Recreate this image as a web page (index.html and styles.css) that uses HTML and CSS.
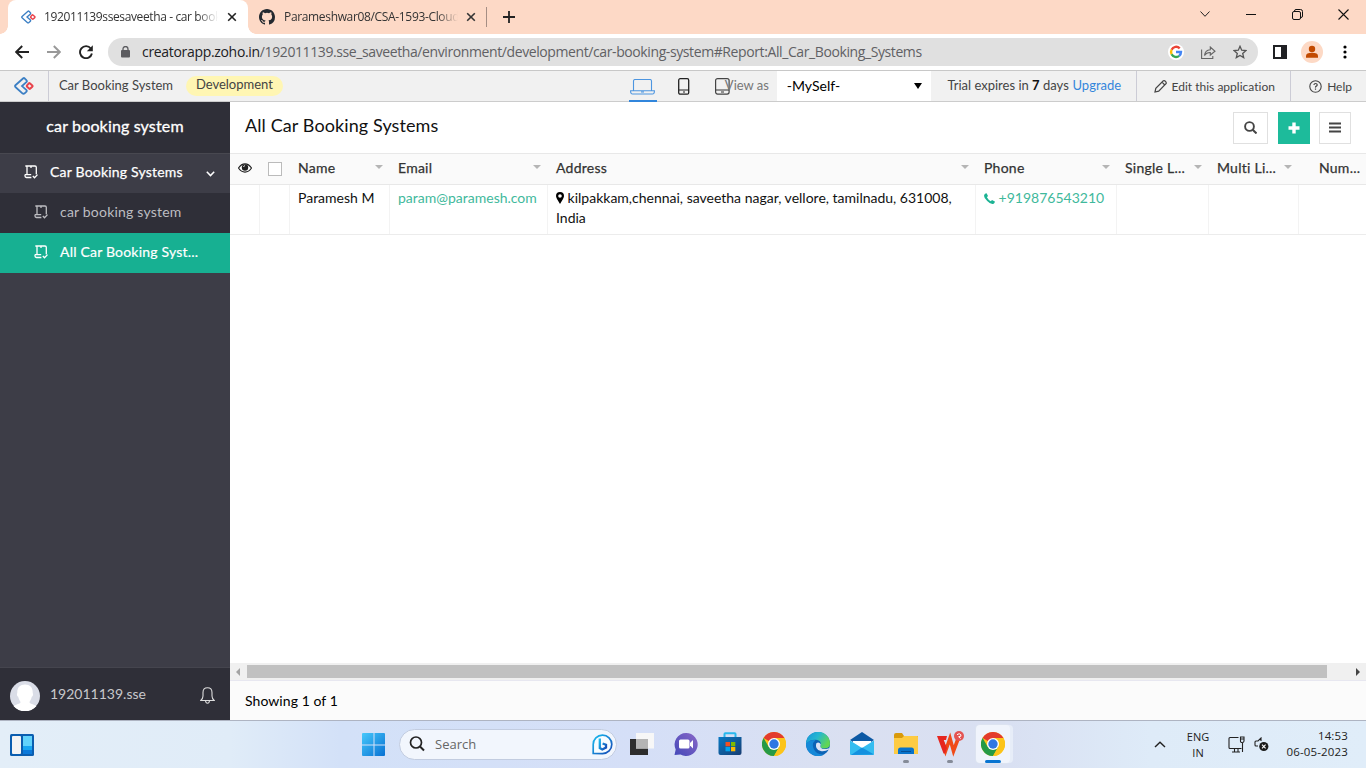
FILE: index.html
```html
<!DOCTYPE html>
<html lang="en">
<head>
<meta charset="utf-8">
<title>car booking system</title>
<link rel="stylesheet" href="styles.css">
</head>
<body>
<svg class="defs" width="0" height="0">
  <symbol id="zoho" viewBox="0 0 20 18"><path d="M9.300 1.300 1.400 8.200a1.200 1.200 0 0 0 0 1.800l7 6.300a1.600 1.600 0 0 0 2.200 0l1.900-1.700a1 1 0 0 0 0-1.500L8 9.100l4.600-4.200a1 1 0 0 0 0-1.500l-2-2.100a1 1 0 0 0-1.300 0Z" fill="none" stroke="#3b7fc4" stroke-width="1.800"/><path d="m15.800 6.300 2.500 2.100a.9.900 0 0 1 0 1.400l-2 1.800a.9.900 0 0 1-1.200 0l-2-1.800a.9.900 0 0 1 0-1.400l1.700-2a.8.800 0 0 1 1-.100Z" fill="none" stroke="#e8434c" stroke-width="2"/></symbol>
  <symbol id="report" viewBox="0 0 14 14"><path d="M3 9.500V2.200Q3 1 1.300 1H11q1.300 0 1.300 1.300v7M.8 9.700h6.400M1 9.700v1.400q0 1.400 1.400 1.400h5M7 1v2M8.800 11l1.700 1.800 3-3.200" fill="none" stroke="currentColor" stroke-width="1.300"/></symbol>
  <symbol id="chrome" viewBox="0 0 24 24"><circle cx="12" cy="12" r="12" fill="#fcc419"/><path d="M12 12 1.600 6A12 12 0 0 1 22.400 6Z" fill="#e33b2e"/><path d="M1.600 6A12 12 0 0 0 12 24l5.200-9L12 12 6.800 15Z" fill="#269a46"/><path d="M12 6h10.400A12 12 0 0 1 12 24l5.200-9Z" fill="#fcc419"/><circle cx="12" cy="12" r="6" fill="#fff"/><circle cx="12" cy="12" r="4.700" fill="#3077e3"/></symbol>
</svg>

<header class="tabs">
  <div class="tab tab-active">
    <svg class="favicon" width="15" height="14"><use href="#zoho"/></svg>
    <span class="tab-text t1">192011139ssesaveetha - car book</span>
    <svg width="10" height="10" viewBox="0 0 10 10"><path d="m1.200 1.200 7.600 7.600m0-7.600L1.200 8.800" stroke="#222" stroke-width="1.600"/></svg>
  </div>
  <div class="tab">
    <svg class="favicon gh" width="16" height="16" viewBox="0 0 16 16"><path fill="#24292f" d="M8 0C3.580 0 0 3.580 0 8c0 3.540 2.290 6.530 5.470 7.590.4.070.55-.170.55-.380 0-.190-.010-.820-.010-1.490-2.010.370-2.530-.490-2.690-.940-.090-.230-.480-.940-.820-1.130-.280-.150-.680-.520-.010-.530.630-.010 1.080.580 1.230.820.720 1.210 1.870.870 2.330.660.070-.520.280-.870.510-1.070-1.780-.200-3.640-.890-3.640-3.950 0-.870.310-1.590.820-2.150-.080-.200-.360-1.020.080-2.120 0 0 .670-.210 2.200.820a7.600 7.600 0 0 1 4 0c1.530-1.040 2.200-.820 2.200-.820.440 1.100.160 1.920.080 2.120.510.560.820 1.270.820 2.150 0 3.070-1.870 3.750-3.650 3.950.290.250.540.730.540 1.480 0 1.070-.010 1.930-.010 2.200 0 .210.150.460.550.380A8 8 0 0 0 16 8c0-4.420-3.580-8-8-8Z"/></svg>
    <span class="tab-text t2">Parameshwar08/CSA-1593-Cloud</span>
    <svg width="10" height="10" viewBox="0 0 10 10"><path d="m1.200 1.200 7.600 7.600m0-7.600L1.200 8.800" stroke="#333" stroke-width="1.600"/></svg>
  </div>
  <i class="tab-sep"></i>
  <svg class="newtab" width="12" height="12"><path d="M6 0v12M0 6h12" stroke="#222" stroke-width="1.800"/></svg>
  <div class="win">
    <svg width="10" height="6"><path d="m.500.500 4.500 4.800L9.500.500" fill="none" stroke="#222"/></svg>
    <svg width="10" height="6"><path d="M0 3.500h10" stroke="#111"/></svg>
    <svg width="11" height="11"><rect x=".5" y="2.500" width="8" height="8" rx="1.500" fill="none" stroke="#111"/><path d="M2.500 2.500v-.500q0-1.500 1.500-1.500h4.500q2 0 2 2V7q0 1.500-1.500 1.500" fill="none" stroke="#111"/></svg>
    <svg width="11" height="11"><path d="m.500.500 10 10m0-10-10 10" stroke="#111" stroke-width="1.100"/></svg>
  </div>
</header>

<nav class="toolbar">
  <svg class="back" width="14" height="14" viewBox="0 0 14 14"><path d="M14 7H1.500M7.200 1 1.200 7l6 6" fill="none" stroke="#222" stroke-width="1.900"/></svg>
  <svg class="fwd" width="14" height="14" viewBox="0 0 14 14"><path d="M0 7h12.500M6.800 1l6 6-6 6" fill="none" stroke="#999" stroke-width="1.900"/></svg>
  <svg class="reload" width="14" height="14" viewBox="0 0 14 14"><path d="M11.800 3.500A6 6 0 1 0 12.900 8.500" fill="none" stroke="#222" stroke-width="1.900"/><path d="M13.800.2v6H7.800Z" fill="#222"/></svg>
  <div class="omnibox">
    <svg class="lock" width="9" height="12" viewBox="0 0 9 12"><rect y="4" width="9" height="7.500" rx="1" fill="#5b5b5f"/><path d="M2 5V3a2.500 2.500 0 0 1 5 0v2" fill="none" stroke="#5b5b5f" stroke-width="1.300"/></svg>
    <span class="url"><b>creatorapp.zoho.in</b>/192011139.sse_saveetha/environment/development/car-booking-system#Report:All_Car_Booking_Systems</span>
    <svg class="google" width="16" height="16" viewBox="0 0 16 16"><circle cx="8" cy="8" r="8" fill="#fff"/><path d="M11.700 4.300A5 5 0 0 0 3.600 5.700" stroke="#ea4335"/><path d="M3.600 5.700a5 5 0 0 0 0 4.600" stroke="#fbbc05"/><path d="M3.600 10.300a5 5 0 0 0 7.600 1.500" stroke="#34a853"/><path d="M11.200 11.800A5 5 0 0 0 13 8H8" stroke="#4285f4"/></svg>
    <svg class="share" width="15" height="13" viewBox="0 0 15 13"><path d="M.6 3.500v9h11.200V10M3.500 9.500Q4 4 9.300 3.700V1L14 5.300 9.300 9V6.500Q5.500 6.300 3.500 9.500Z" fill="none" stroke="#666" stroke-width="1.100"/></svg>
    <svg class="star" width="14" height="14" viewBox="0 0 14 14"><path d="m7 1.300 1.700 3.900 4.200.4-3.200 2.800 1 4.200L7 10.400l-3.700 2.200 1-4.200L1.100 5.600l4.200-.4Z" fill="none" stroke="#555" stroke-width="1.300"/></svg>
  </div>
  <svg class="panel" width="14" height="14"><rect x="1" y="1" width="12" height="12" fill="#fff" stroke="#202124" stroke-width="2"/><path d="M8 0h6v14H8Z" fill="#202124"/></svg>
  <svg class="profile" width="22" height="22"><circle cx="11" cy="11" r="11" fill="#fdd9c5"/><circle cx="11" cy="8" r="3.200" fill="#c24a00"/><path d="M5 16.800V15q0-3.200 6-3.200t6 3.200v1.800Z" fill="#c24a00"/></svg>
  <svg class="dots" width="4" height="14"><circle cx="2" cy="2" r="1.600"/><circle cx="2" cy="7" r="1.600"/><circle cx="2" cy="12" r="1.600"/></svg>
</nav>

<section class="appbar">
  <div class="brand"><svg width="20" height="18"><use href="#zoho"/></svg></div>
  <span class="appname">Car Booking System</span>
  <span class="badge">Development</span>
  <div class="device current"><svg width="25" height="16" viewBox="0 0 25 16"><path d="M3.500 12V2q0-1.500 1.500-1.500h15q1.500 0 1.500 1.500v10M.6 11.800h23.800q.1 3.200-2 3.200H2.600q-2.100 0-2-3.200ZM11 13h3" fill="none" stroke="#4c95e0" stroke-width="1.100"/></svg></div>
  <svg class="phone" width="12" height="17"><rect x=".7" y=".7" width="10" height="15.500" rx="1.500" fill="none" stroke="#222" stroke-width="1.300"/><path d="M1 12h10" stroke="#222"/><path d="M5 14h2" stroke="#222"/></svg>
  <svg class="tablet" width="15" height="17"><rect x=".6" y=".6" width="13.500" height="15.500" rx="2" fill="none" stroke="#444" stroke-width="1.200"/><path d="M1 12h13M6 14h3" stroke="#333"/></svg>
  <span class="viewas">View as</span>
  <div class="select"><span>-MySelf-</span><i></i></div>
  <span class="trial">Trial expires in <b>7</b> days</span><span class="upgrade">Upgrade</span>
  <div class="edit"><svg width="13" height="13" viewBox="0 0 13 13"><path d="m1 12 .8-3.700L9.300.8q1.200-.5 2.200.6t.7 2.100l-7.500 7.700ZM8 2.200 10.800 5" fill="none" stroke="#444" stroke-width="1.200"/></svg><span>Edit this application</span></div>
  <div class="help"><svg width="13" height="13"><circle cx="6.500" cy="6.500" r="5.700" fill="none" stroke="#444" stroke-width="1.100"/><path d="M4.900 5q.2-1.500 1.700-1.500T8.200 4.900Q8.200 5.700 7.300 6.100T6.500 7.600M6.500 8.500v1.200" fill="none" stroke="#444" stroke-width="1.200"/></svg><span>Help</span></div>
</section>

<div class="work">
  <aside class="side">
    <div class="side-title">car booking system</div>
    <div class="item section"><svg width="14" height="14"><use href="#report"/></svg><span>Car Booking Systems</span><svg class="down" width="9" height="6"><path d="m.8.800 3.700 3.800L8.200.800" fill="none" stroke="#fff" stroke-width="1.500"/></svg></div>
    <div class="item sub"><svg width="14" height="14"><use href="#report"/></svg><span>car booking system</span></div>
    <div class="item sub selected"><svg width="14" height="14"><use href="#report"/></svg><span>All Car Booking Syst...</span></div>
    <div class="user">
      <svg class="avatar" width="30" height="30"><circle cx="15" cy="15" r="15" fill="#dadde7"/><path d="M15 3.500c5 0 8 3 7.700 8.500 1 2-.2 3.300-.9 3.700-.5 2.600-2 4.300-2.300 5.300 0 2 4.500 2.300 7 4A15 15 0 0 1 3.500 25c2.500-1.700 7-2 7-4-.3-1-1.800-2.700-2.300-5.300-.7-.4-1.900-1.700-.9-3.700C7 6.500 10 3.500 15 3.500Z" fill="#fff"/></svg>
      <span>192011139.sse</span>
      <svg class="bell" width="15" height="17" viewBox="0 0 15 17"><path d="M.8 13.500h13.400Q12 11.500 12 9V5.500Q12 .8 7.500.8T3 5.500V9q0 2.500-2.200 4.500ZM5.500 13.700q.3 2.500 2 2.500t2-2.500" fill="none" stroke="#ddd" stroke-width="1.100"/></svg>
    </div>
  </aside>
  <main class="main">
    <div class="head">
      <h1>All Car Booking Systems</h1>
      <div class="btn wide"><svg width="13" height="13"><circle cx="5.500" cy="5.500" r="4.400" fill="none" stroke="#444" stroke-width="1.900"/><path d="m8.700 8.700 3.800 3.800" stroke="#444" stroke-width="2"/></svg></div>
      <div class="btn add"><svg width="12" height="12"><path d="M6 .5v11M.5 6h11" stroke="#fff" stroke-width="3.400"/></svg></div>
      <div class="btn"><svg width="12" height="11"><path d="M0 1.500h12M0 5.500h12M0 9.500h12" stroke="#444" stroke-width="2"/></svg></div>
    </div>
    <div class="grid thead">
      <div class="eye"><svg width="14" height="10"><path d="M.5 5Q3.300.9 7 .9T13.500 5Q10.700 9.100 7 9.100T.5 5Z" fill="#fff" stroke="#222" stroke-width="1.200"/><circle cx="7" cy="4.500" r="3.200" fill="#222"/><path d="M5.500 4Q5.600 2.700 7 2.600" stroke="#fff" fill="none" stroke-width=".8"/></svg></div>
      <div class="check"><i></i></div>
      <div><span>Name</span><i class="caret"></i></div>
      <div><span>Email</span><i class="caret"></i></div>
      <div><span>Address</span><i class="caret"></i></div>
      <div><span>Phone</span><i class="caret"></i></div>
      <div><span>Single L...</span><i class="caret"></i></div>
      <div><span>Multi Li...</span><i class="caret"></i></div>
      <div class="num"><span>Num...</span></div>
    </div>
    <div class="grid row">
      <div></div><div></div>
      <div><span class="c-name">Paramesh M</span></div>
      <div class="link"><span class="c-mail">param@paramesh.com</span></div>
      <div class="address"><svg width="8" height="12" viewBox="0 0 8 12"><path d="M4 0a4 4 0 0 1 4 4q0 1.200-1 3L4 12 1 7Q0 5.200 0 4a4 4 0 0 1 4-4Zm0 2.200a1.800 1.800 0 1 0 0 3.600 1.800 1.800 0 0 0 0-3.600Z"/></svg> kilpakkam,chennai, saveetha nagar, vellore, tamilnadu, 631008,<br>India</div>
      <div class="link"><svg width="11" height="11" viewBox="0 0 11 11"><path d="M.2 2Q.6.300 2.600.200L4 3 2.900 4.300q1.300 2.600 3.900 3.900L8 7l2.900 1.500q0 2-1.700 2.400Q6.500 11.500 3.200 8 -.6 4.500.2 2Z" fill="#1cb394"/></svg> <span class="c-phone">+919876543210</span></div>
      <div></div><div></div><div></div>
    </div>
    <div class="blank"></div>
    <div class="scroll"><svg width="17" height="17"><path d="m10 5-4 4 4 4Z" fill="#a3a3a3"/></svg><i></i><svg width="17" height="17"><path d="m7 5 4 4-4 4Z" fill="#444"/></svg></div>
    <footer class="foot">Showing 1 of 1</footer>
  </main>
</div>

<footer class="taskbar">
  <svg class="widgets" width="24" height="22"><defs><linearGradient id="sky" x1="0" y1="0" x2="1" y2="1"><stop stop-color="#46c8fb"/><stop offset="1" stop-color="#0871d3"/></linearGradient></defs><rect width="24" height="22" rx="1.500" fill="#0b5eb0"/><rect x="2" y="2" width="9" height="18" rx="1" fill="#f4f4f4"/><path d="M13 2h9v10h-9Z" fill="#62d3fb"/><path d="M13 12h9v4h-9Z" fill="#18a6f2"/><path d="M13 16h9v4h-9Z" fill="#0b79da"/></svg>
  <svg class="start" width="24" height="24"><path d="M0 1q0-1 1-1h10.500v11.500H0ZM12.500 0H22q1 0 1 1v10.500H12.500ZM0 12.500h11.500V23H1q-1 0-1-1ZM12.500 12.500H23V22q0 1-1 1h-9.500Z" fill="url(#sky)"/></svg>
  <div class="search">
    <svg width="16" height="16"><circle cx="7" cy="6.500" r="5.500" fill="none" stroke="#222" stroke-width="1.700"/><path d="m11 10.500 4 4" stroke="#222" stroke-width="2"/></svg>
    <span>Search</span>
    <svg class="bing" width="21" height="21"><defs><linearGradient id="bg" x1="0" y1="0" x2="1" y2="1"><stop stop-color="#19bdf0"/><stop offset="1" stop-color="#1648b5"/></linearGradient></defs><path d="M1.200 19.500V10.500a9.300 9.300 0 1 1 9.300 9.200Z" fill="#f7fcff" stroke="url(#bg)" stroke-width="1.700"/><path d="M7.800 4.500v9.500l2.500 1.500 3.700-2v-2.700l-3.400-1.300" fill="none" stroke="url(#bg)" stroke-width="2.300"/></svg>
  </div>
  <div class="apps">
    <div><svg width="24" height="24"><path d="M0 7h18v16H0Z" fill="#2d2d2d"/><path d="M6 1h18v15.500H6Z" fill="#f7f7f7"/><path d="M6 7h12v9.500H6Z" fill="#b4b4b4"/></svg></div>
    <div><svg width="24" height="24"><defs><linearGradient id="cg" x1="0" y1="1" x2="1" y2="0"><stop stop-color="#4348b8"/><stop offset="1" stop-color="#8a68c8"/></linearGradient></defs><path d="M12 1a11.500 11.500 0 1 1-5.500 21.500L.5 23l1.200-5.500A11.500 11.500 0 0 1 12 1Z" fill="url(#cg)"/><rect x="5" y="7.500" width="10.500" height="9" rx="1.500" fill="#fff"/><path d="m16 11 3-3v8.500l-3-3Z" fill="#fff"/></svg></div>
    <div><svg width="24" height="24"><defs><linearGradient id="sg" x1="0" y1="0" x2="1" y2="1"><stop stop-color="#0879c4"/><stop offset="1" stop-color="#183d72"/></linearGradient></defs><path d="M6.500 6V2q0-.8.800-.8h9.400q.8 0 .8.800v4" fill="none" stroke="#28b8ed" stroke-width="2"/><path d="M.5 5h23v16q0 2-2 2h-19q-2 0-2-2Z" fill="url(#sg)"/><path d="M7.500 10H12v4.300H7.500Z" fill="#f25022"/><path d="M13 10h4.300v4.300H13Z" fill="#7fba00"/><path d="M7.500 15H12v4.300H7.500Z" fill="#00a4ef"/><path d="M13 15h4.300v4.300H13Z" fill="#ffb900"/></svg></div>
    <div><svg width="24" height="24"><use href="#chrome"/></svg></div>
    <div><svg width="24" height="24"><defs><linearGradient id="eg" x1="0" y1="0" x2="1" y2=".5"><stop stop-color="#1592dc"/><stop offset=".5" stop-color="#25b7d0"/><stop offset="1" stop-color="#62d653"/></linearGradient></defs><circle cx="12" cy="12" r="12" fill="#0c63b5"/><path d="M0 12A12 12 0 0 1 24 11.500q0 4.500-5 5-5.500.2-4.500-2.700 1.500-5.200-4.500-6Q4 7.300 0 12Z" fill="url(#eg)"/><path d="M0 12q3.500-4.600 9.500-4Q5 12 8 17.500q3.500 6 10.500 4.700A12 12 0 0 1 0 12Z" fill="#1689d8"/><path d="M10.200 11.500q-1.500 6 4.500 7.500 4 .7 8.300-1.500 1-2-1-1-5.500 1.700-7.500-1.300-.5-1 .3-2.700-2-3.500-4.600-1Z" fill="#dce3f4"/></svg></div>
    <div><svg width="24" height="24"><path d="m12 0 12 8-12 8L0 8Z" fill="#0c59a4"/><path d="M3 9h18v7H3Z" fill="#fff"/><path d="M0 8.500 12 16l12-7.500V22q0 1-1 1H1q-1 0-1-1Z" fill="#35bdf0"/><path d="m12 15.500 12 7L1 23Z" fill="#1491df"/></svg></div>
    <div class="running"><svg width="24" height="24"><path d="M0 3q0-2 2-2h6l2 3h14v7H0Z" fill="#d99a0b"/><path d="M0 6h8l2-2h13q1 0 1 1v17H0Z" fill="#fdcb43"/><path d="M4 22v-4q0-2.500 2.500-2.500h11Q20 15.500 20 18v4Z" fill="#0873cb"/><path d="M7 19.500h10" stroke="#064f94"/></svg></div>
    <div class="running"><svg width="27" height="26" viewBox="0 0 27 26"><path d="m4 6.500 4.500 13.500 4.500-12.500 3.500 12.500L21 8" fill="none" stroke="#f04b18" stroke-width="3.600"/><path d="M0 5h10l-1 4H6.500l3.500 8-2 5.500H6.500Z" fill="#e6261f"/><circle cx="22" cy="5" r="5" fill="#e45453"/><path d="M20 3.700q2.500-2 3.800 0t-2.200 2l2 2" stroke="#fff" fill="none"/></svg></div>
    <div class="running focused"><svg width="24" height="24"><use href="#chrome"/></svg></div>
  </div>
  <svg class="up" width="12" height="7"><path d="m1 6 5-4.800L11 6" fill="none" stroke="#222" stroke-width="1.400"/></svg>
  <div class="lang">ENG<br>IN</div>
  <svg class="monitor" width="17" height="17"><path d="M10.500 1.500H2Q1 1.500 1 2.500v9q0 1 1 1h11.500M4 16h8M6.500 12.500V16M10 12.500V16M14.500 6.500V16M12.500 1h3.500v4q0 1.500-1.800 1.500T12.500 5ZM12.500 3H16" fill="none" stroke="#222" stroke-width="1.100"/></svg>
  <svg class="speaker" width="15" height="15"><path d="M7 4V1L4 4H2Q1 4 1 5v3q0 1 1 1h2" fill="none" stroke="#222" stroke-width="1.100"/><circle cx="9.800" cy="9.500" r="4.600" fill="#1b1b1b"/><path d="m8 7.700 3.600 3.600m0-3.600L8 11.300" stroke="#fff" stroke-width="1.100"/></svg>
  <div class="clock">14:53<br>06-05-2023</div>
</footer>
</body>
</html>
```
FILE: styles.css
```css
* { box-sizing: border-box; }
html, body { margin: 0; width: 1366px; height: 768px; overflow: hidden; }
body { font-family: Lato, sans-serif; font-size: 14px; color: #111; background: #fff; display: flex; flex-direction: column; }
svg { display: block; flex: none; }
span { white-space: nowrap; flex: none; }
.defs { position: absolute; }

.tabs { height: 34px; flex: none; background: #fdd9c6; display: flex; font-family: "Open Sans", sans-serif; font-size: 12px; color: #333; }
.tab { display: flex; align-items: center; width: 239px; height: 34px; padding-left: 11px; }
.tab-active { position: relative; margin-left: 8px; width: 240px; padding-left: 13px; background: #fff; border-radius: 8px 8px 0 0; }
.tab-active::before, .tab-active::after { content: ""; position: absolute; bottom: 0; width: 8px; height: 8px; background: radial-gradient(circle at 0 0, transparent 7.5px, #fff 8px); }
.tab-active::before { left: -8px; }
.tab-active::after { right: -8px; transform: scaleX(-1); }
.tab-text { width: 174px; margin-left: 9px; overflow: hidden; line-height: 20px; -webkit-mask-image: linear-gradient(90deg, #000 88%, transparent); mask-image: linear-gradient(90deg, #000 88%, transparent); }
.tab-active .tab-text { margin-left: 8px; }
.tab svg:last-child { margin-left: 8px; }
.tab-active svg:last-child { margin-left: 9px; }
.t1 { letter-spacing: -.38px; }
.t2 { letter-spacing: -.34px; }
.tab-sep { width: 1px; height: 20px; margin: 7px 16px 0 -1px; background: #a58e84; }
.newtab { margin-top: 11px; }
.win { margin-left: auto; width: 184px; height: 28px; display: grid; grid-template-columns: repeat(4, 46px); place-items: center; }

.toolbar { height: 36px; flex: none; display: flex; align-items: center; padding: 0 19px 0 15px; }
.fwd { margin-left: 18px; }
.reload { margin-left: 18px; }
.omnibox { margin-left: 15px; width: 1150px; height: 28px; border-radius: 14px; background: #e0e0e0; display: flex; align-items: center; padding-left: 13px; }
.url { width: 778px; margin-left: 12px; font: 14px/20px "Open Sans", sans-serif; letter-spacing: -.4px; color: #606064; }
.url b { font-weight: 400; color: #202124; letter-spacing: -.32px; }
.google { margin-left: 248px; fill: none; stroke-width: 2.400; }
.share { margin-left: 17px; }
.star { margin-left: 17px; }
.panel { margin-left: 15px; }
.profile { margin-left: 14px; }
.dots { margin-left: 20px; }

.appbar { height: 32px; flex: none; display: flex; align-items: center; background: #f1f1f1; border-top: 1px solid #c8c8c8; border-bottom: 1px solid #ccc; font-size: 13px; color: #444; }
.brand { width: 49px; height: 30px; border-right: 1px solid #ccccd6; display: flex; align-items: center; padding-left: 14px; }
.appname { width: 117px; margin: -3px 0 0 10px; }
.badge { width: 97px; height: 20px; margin: -1px 0 0 10px; border-radius: 10px; background: #fff6b3; text-align: center; line-height: 17px; }
.device { width: 28px; height: 31px; margin-left: 346px; border-bottom: 2px solid #3186dc; display: flex; justify-content: center; padding-top: 8px; }
.phone { margin-left: 21px; }
.tablet { margin-left: 25px; }
.viewas { width: 53px; margin: -3px 0 0 -5px; color: #777; }
.select { width: 155px; height: 30px; margin-left: -1px; background: #fff; display: flex; align-items: center; justify-content: space-between; padding: 0 9px 0 10px; font-size: 14px; color: #000; }
.select span { margin-top: -2px; }
.select i { border: 4px solid transparent; border-top: 6px solid #000; border-bottom: 0; }
.trial { width: 125px; margin: -3px 0 0 16px; }
.trial b { color: #111; }
.upgrade { width: 64px; margin-top: -3px; color: #3486dc; }
.edit { width: 154px; height: 30px; border-left: 1px solid #ccccd6; display: flex; align-items: center; padding-left: 17px; font-size: 12px; }
.edit span { margin-left: 4px; letter-spacing: .01px; font-variant-ligatures: common-ligatures; }
.help { width: 76px; height: 30px; border-left: 1px solid #ccccd6; display: flex; align-items: center; padding-left: 18px; font-size: 12px; }
.help span { margin-left: 5px; }

.work { height: 618px; flex: none; display: flex; }
.side { width: 230px; display: flex; flex-direction: column; background: #3d3d47; color: #fff; }
.side-title { height: 51px; background: #2f2f38; text-align: center; line-height: 48px; font-size: 16px; letter-spacing: .15px; -webkit-text-stroke: .3px #fff; }
.item { height: 40px; display: flex; align-items: center; font-size: 14px; letter-spacing: .2px; }
.item svg { margin-top: -2px; }
.item span { margin-top: -3px; }
.section { border-top: 1px solid #484850; padding-left: 24px; -webkit-text-stroke: .25px #fff; }
.section span { width: 156px; margin: -5px 0 0 12px; }
.item.section > svg:first-child { margin-top: -4px; }
.item .down { margin-top: 1px; }
.sub { padding-left: 34px; background: #2f2f38; color: #bdbdc1; }
.sub span { margin-left: 12px; }
.selected { background: #17b092; color: #fff; -webkit-text-stroke: .2px #fff; }
.user { height: 53px; margin-top: auto; background: #2f2f38; border-top: 1px solid #45454e; display: flex; align-items: center; padding: 3px 0 0 10px; color: #c8c8cb; }
.user span { width: 150px; margin: -4px 0 0 10px; }

.main { width: 1136px; display: flex; flex-direction: column; }
.head { height: 51px; display: flex; align-items: center; padding: 0 15px; }
.head h1 { flex: 1; margin: -5px 0 0; font-size: 18px; font-weight: 400; letter-spacing: .1px; }
.btn { width: 32px; height: 32px; margin-left: 9px; border: 1px solid #e0e0e0; display: grid; place-items: center; }
.btn.wide { width: 35px; }
.btn.add { margin-left: 10px; background: #1dbb9b; border-color: #1dbb9b; }
.grid { display: grid; grid-template-columns: 30px 30px 100px 158px 428px 141px 92px 90px 67px; }
.thead { height: 32px; border: 1px solid #e8e8e8; border-width: 1px 0; background: #fafafa; color: #333; font-size: 14px; -webkit-text-stroke: .25px #333; letter-spacing: .25px; }
.thead > div { display: flex; align-items: center; justify-content: space-between; padding: 0 7px 3px 8px; }
.thead > .num { padding-left: 20px; padding-right: 0; }
.thead > .eye { padding-left: 8px; }
.thead .check { padding: 0 0 0 8px; }
.check i { width: 14px; height: 14px; border: 1px solid #bbb; background: #fff; }
.caret { margin-top: -2px; border: 4px solid transparent; border-top: 4px solid #b5b5b5; border-bottom: 0; }
.row { height: 50px; border-bottom: 1px solid #ececec; line-height: 20px; }
.row > div { padding: 3px 0 0 8px; border-right: 1px solid #f3f3f3; white-space: nowrap; }
.row > div:last-child { border-right: 0; }
.row svg { display: inline-block; vertical-align: -1px; }
.link { color: #3fb99c; }
.blank { flex: 1; }
.scroll { height: 17px; background: #f0f0f0; display: flex; }
.scroll i { width: 1080px; height: 13px; margin: 2px 22px 0 0; background: #c1c1c1; }
.foot { height: 40px; border-top: 1px solid #e7e7f0; background: #fbfbfb; padding-left: 15px; line-height: 39px; color: #000; letter-spacing: .06px; }

.taskbar { height: 48px; flex: none; display: flex; align-items: center; border-top: 1px solid #aeb4c2; background: linear-gradient(90deg, #e3eef8 0, #e0ecf8 230px, #d3e1f8 340px, #d5dff7 640px, #dae0f1 850px, #d9e0f2 1010px, #deebf8 1150px, #e0edf9); font-family: "Open Sans", sans-serif; color: #222; }
.widgets { margin-left: 10px; }
.start { margin-left: 328px; }
.search { width: 218px; height: 31px; margin: -1px 0 0 13px; border: 1px solid #c2cce0; border-radius: 16px; background: #f2f6fd; display: flex; align-items: center; padding-left: 9px; color: #666; font-size: 13px; }
.search span { width: 157px; margin-left: 10px; }
.apps { width: 396px; height: 47px; margin-left: 2px; padding-left: 1px; display: grid; grid-template-columns: repeat(9, 44px); }
.apps div { position: relative; height: 47px; padding-bottom: 1px; display: grid; place-items: center; }
.running::after { content: ""; position: absolute; left: 19px; bottom: 5px; width: 6px; height: 3px; border-radius: 2px; background: #858b98; }
.apps .focused { width: 34px; height: 38px; margin: 4px 0 0 4px; padding: 0; border-radius: 4px; background: #f0f4fc; box-shadow: 3px 0 0 #e7edf8, 0 0 0 1px #dce3f0; }
.focused::after { left: 9px; bottom: 0; width: 16px; background: #0874d1; }
.up { margin-left: 139px; }
.lang { width: 40px; margin-left: 12px; text-align: center; font-size: 11px; line-height: 16px; padding-top: 1px; }
.monitor { margin-left: 10px; }
.speaker { margin-left: 9px; }
.clock { margin-left: auto; margin-right: 18px; text-align: right; font-size: 11.500px; line-height: 16px; letter-spacing: .15px; white-space: nowrap; margin-top: -2px; }
```
